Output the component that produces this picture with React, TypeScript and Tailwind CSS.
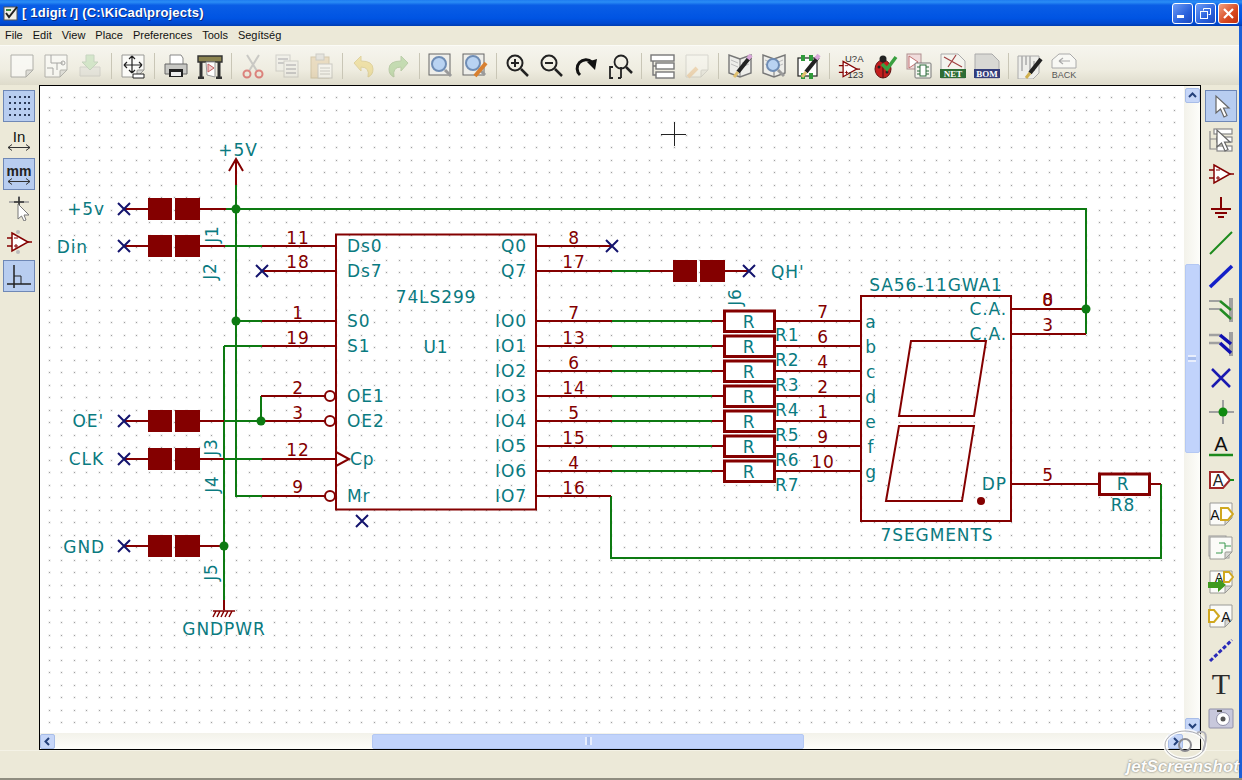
import type { ReactNode } from "react"

const RED = "#840000"
const GREEN = "#0d7a12"
const TEAL = "#0a7a80"
const NAVY = "#14146e"

function Ic({ children, size = 26 }: { children: ReactNode; size?: number }) {
  return (
    <svg width={size} height={size} viewBox="0 0 26 26" fill="none">
      {children}
    </svg>
  )
}

const Page = ({ o = 1 }: { o?: number }) => (
  <g opacity={o}>
    <path d="M2 2H24V17L17 24H2Z" fill="#fbfbf8" stroke="#9a9a96" />
    <path d="M17 24V18Q17 17 18 17H24Z" fill="#d8d8d4" stroke="#9a9a96" />
  </g>
)

const Lens = ({ x = 12, y = 11, r = 7 }: { x?: number; y?: number; r?: number }) => (
  <g>
    <circle cx={x} cy={y} r={r} fill="#b9d3f2" stroke="#6f8db5" strokeWidth="2" />
    <path d={`M${x + r - 1} ${y + r - 1}l6 6`} stroke="#9a9a9a" strokeWidth="3" />
  </g>
)

const Pencil = () => (
  <g>
    <path d="M23 4L11 19" stroke="#222" strokeWidth="4" />
    <path d="M24 2L21 6" stroke="#d9a7d9" strokeWidth="4" />
    <path d="M11 19L7 24" stroke="#e0c070" strokeWidth="3" />
  </g>
)

const Book = () => (
  <g>
    <path d="M13 6L2 2V20L13 24L24 20V2Z" fill="#eeeeea" stroke="#777" strokeWidth="1.4" />
    <path d="M13 6V24" stroke="#777" />
    <path d="M4 7l7 3M4 11l7 3M15 10l7-3M15 14l7-3" stroke="#bbb" />
  </g>
)

const Opamp = ({ c = RED }: { c?: string }) => (
  <g stroke={c} strokeWidth="1.5" fill="#fff">
    <path d="M6 4L22 13L6 22Z" />
    <path d="M1 9H6M1 17H6M22 13H26" />
    <path d="M8 9H12M8 17H12M10 15V19" strokeWidth="1" />
  </g>
)

const Chain = () => (
  <g stroke="#888" fill="#fff" strokeWidth="1.2">
    <rect x="6" y="2" width="18" height="5" />
    <rect x="9" y="10" width="15" height="5" />
    <rect x="9" y="19" width="15" height="5" />
    <path d="M2 4V22H9M2 12H9" fill="none" />
  </g>
)

const Arrow = ({ x = 0, y = 0 }: { x?: number; y?: number }) => (
  <path
    transform={`translate(${x} ${y})`}
    d="M4 2V19L8.500 15L12 23L15 21.500L11.500 14H17Z"
    fill="#fff"
    stroke="#666"
    strokeWidth="1.2"
  />
)

const topIcons: (ReactNode | null)[] = [
  <Page o={0.75} />,
  <g opacity={0.7}>
    <Page />
    <path d="M8 2V10H14V17M14 10H20M4 15H10V22" stroke="#888" />
    <circle cx="20" cy="10" r="2" stroke="#888" />
  </g>,
  <g opacity={0.4}>
    <path d="M3 14H23V23H3Z" fill="#d8d8d4" stroke="#aaa" />
    <path d="M9 2H17V9H21L13 17L5 9H9Z" fill="#a8d8a0" stroke="#8a8" />
  </g>,
  null,
  <g>
    <Page />
    <path d="M12 3V20M4 12H22M12 3l-3 3M12 3l3 3M12 20l-3-3M12 20l3-3M4 12l3-3M4 12l3 3M22 12l-3-3M22 12l-3 3" stroke="#222" strokeWidth="1.2" />
    <path d="M13 21H24V25H13Z" fill="#fff" stroke="#222" />
  </g>,
  null,
  <g>
    <path d="M7 2H18L20 5V12H7Z" fill="#fff" stroke="#888" />
    <path d="M2 11H24V21H2Z" fill="#c8c8c4" stroke="#666" />
    <path d="M6 16H20V24H6Z" fill="#222" />
    <path d="M8 19H18V23H8Z" fill="#eee" />
  </g>,
  <g>
    <path d="M1 3H25V9H1Z" fill="#8c8450" stroke="#333" strokeWidth="1.4" />
    <path d="M4 9V24M22 9V24M1 25H7M19 25H25" stroke="#333" strokeWidth="3" />
    <path d="M9 9H18V24L10 22Z" fill="#fff" stroke="#999" />
    <path d="M11 11L17 15L11 19Z" fill="#f3cfcf" stroke="#c06060" />
  </g>,
  null,
  <g opacity={0.55} stroke="#d03030" strokeWidth="2">
    <path d="M7 2L17 18M19 2L9 18" stroke="#aaa" />
    <circle cx="7" cy="21" r="3.500" />
    <circle cx="19" cy="21" r="3.500" />
  </g>,
  <g opacity={0.3}>
    <rect x="2" y="2" width="14" height="16" fill="#eee" stroke="#888" />
    <path d="M4 6H14M4 10H14" stroke="#778" strokeWidth="2" />
    <rect x="10" y="8" width="14" height="16" fill="#eee" stroke="#888" />
    <path d="M12 12H22M12 16H22M12 20H22" stroke="#778" strokeWidth="2" />
  </g>,
  <g opacity={0.35}>
    <rect x="3" y="4" width="18" height="21" fill="#dcb880" stroke="#a08040" />
    <rect x="8" y="1" width="8" height="6" fill="#ccc" stroke="#888" />
    <rect x="10" y="11" width="14" height="14" fill="#fff" stroke="#888" />
    <path d="M12 15H22M12 18H22M12 21H22" stroke="#888" />
  </g>,
  null,
  <g opacity={0.3}>
    <path d="M3 10L10 3V8Q22 8 22 16Q22 22 17 24Q19 14 10 14V18Z" fill="#e8c020" stroke="#b89000" />
  </g>,
  <g opacity={0.3} transform="matrix(-1 0 0 1 26 0)">
    <path d="M3 10L10 3V8Q22 8 22 16Q22 22 17 24Q19 14 10 14V18Z" fill="#60b040" stroke="#408020" />
  </g>,
  null,
  <g>
    <rect x="1" y="1" width="21" height="21" fill="#eeeeea" stroke="#666" />
    <Lens x={11} y={11} r={7} />
  </g>,
  <g>
    <rect x="1" y="1" width="21" height="21" fill="#eeeeea" stroke="#666" />
    <Lens x={11} y={10} r={7} />
    <path d="M24 10L13 23" stroke="#d88030" strokeWidth="4" />
  </g>,
  null,
  <g stroke="#222" strokeWidth="2">
    <circle cx="10" cy="10" r="7.500" />
    <path d="M16 16l7 7" strokeWidth="2.500" />
    <path d="M6 10H14M10 6V14" />
  </g>,
  <g stroke="#222" strokeWidth="2">
    <circle cx="10" cy="10" r="7.500" />
    <path d="M16 16l7 7" strokeWidth="2.500" />
    <path d="M6 10H14" />
  </g>,
  <g>
    <path d="M19 9A8 8 0 1 0 7 22" stroke="#111" strokeWidth="3" />
    <path d="M14 9L24 6L22 17Z" fill="#111" />
  </g>,
  <g stroke="#222" strokeWidth="1.8">
    <circle cx="14" cy="9" r="6.500" />
    <path d="M19 14l6 6" strokeWidth="2.500" />
    <path d="M6 14H3V25H6M14 14V25M14 25H11" />
  </g>,
  null,
  <g stroke="#777" fill="#fff" strokeWidth="1.4">
    <rect x="1" y="2" width="23" height="6" />
    <rect x="6" y="10" width="18" height="6" />
    <rect x="6" y="19" width="18" height="6" />
    <path d="M3 8V22H6M3 13H6" fill="none" />
  </g>,
  <g opacity={0.3}>
    <Page />
    <path d="M4 24L13 15" stroke="#e8a050" strokeWidth="4" />
  </g>,
  null,
  <g>
    <Book />
    <Pencil />
  </g>,
  <g>
    <Book />
    <Lens x={12} y={12} r={6} />
  </g>,
  <g>
    <rect x="3" y="5" width="19" height="18" fill="#fff" stroke="#222" strokeWidth="1.2" />
    <path d="M6 2h4v6H6zM14 2h4v6h-4zM6 20h4v6H6zM14 20h4v6h-4z" fill="#2f9a3a" />
    <Pencil />
  </g>,
  null,
  <g>
    <g transform="translate(0 5) scale(.85)">
      <Opamp />
    </g>
    <text x="7" y="9" fontSize="9.500" fontFamily="Liberation Sans" fill="#333">U?A</text>
    <text x="9.500" y="25" fontSize="9.500" fontFamily="Liberation Sans" fill="#333">123</text>
  </g>,
  <g>
    <ellipse cx="11" cy="16" rx="8" ry="9" fill="#c41e1e" stroke="#601010" />
    <circle cx="11" cy="6" r="3.500" fill="#222" />
    <path d="M11 8V25" stroke="#401010" />
    <circle cx="7" cy="14" r="1.500" fill="#222" />
    <circle cx="15" cy="19" r="1.500" fill="#222" />
    <path d="M10 11L15 16L24 4" stroke="#3aa040" strokeWidth="3.500" />
  </g>,
  <g>
    <rect x="1" y="1" width="14" height="15" fill="#f0dcdc" stroke="#b09090" />
    <path d="M3 3L12 9L3 15Z" fill="#fff" stroke="#c07070" />
    <rect x="9" y="10" width="16" height="15" rx="1" fill="#f4f4ee" stroke="#777" />
    <rect x="14" y="12" width="6" height="11" fill="#fff" stroke="#2a6a3a" />
    <path d="M11 14h3M11 18h3M11 21h3M20 14h3M20 18h3M20 21h3" stroke="#2a6a3a" />
  </g>,
  <g>
    <path d="M1 1H18L25 8V25H1Z" fill="#f4f4ee" stroke="#aaa" />
    <path d="M4 4L22 14M16 2L8 14" stroke="#a04040" strokeWidth="1.2" />
    <rect x="0" y="16" width="26" height="9" fill="#2d6d35" />
    <text x="13" y="24" textAnchor="middle" fontSize="9" fontWeight="700" fontFamily="Liberation Serif" fill="#fff">NET</text>
  </g>,
  <g>
    <path d="M1 1H18L25 8V25H1Z" fill="#d8d8d4" stroke="#aaa" />
    <rect x="0" y="16" width="26" height="9" fill="#333d7a" />
    <text x="13" y="24" textAnchor="middle" fontSize="9" fontWeight="700" fontFamily="Liberation Serif" fill="#fff">BOM</text>
  </g>,
  null,
  <g>
    <path d="M1 3H22V20L16 26H1Z" fill="#eeeeea" stroke="#aaa" />
    <path d="M5 3V18M9 3V12M13 3V20M17 8V18" stroke="#aaa" strokeWidth="1.5" />
    <path d="M24 6L13 20" stroke="#222" strokeWidth="4" />
    <path d="M13 20L9 25" stroke="#d0b050" strokeWidth="3" />
  </g>,
  <g>
    <path d="M8 1H19L25 7V15H1V7Z" fill="#f8f8f4" stroke="#aaa" />
    <path d="M19 8H8M8 8l4-3M8 8l4 3" stroke="#aaa" strokeWidth="1.2" />
    <text x="13" y="24.500" textAnchor="middle" fontSize="9" fontFamily="Liberation Sans" fill="#555">BACK</text>
  </g>,
]

const rightIcons: ReactNode[] = [
  <Ic><Arrow x={4} y={1} /></Ic>,
  <Ic>
    <Chain />
    <Arrow x={5} y={1} />
  </Ic>,
  <Ic><Opamp /></Ic>,
  <Ic><path d="M13 2V14M3 14H23M7 18H19M10 22H16" stroke={RED} strokeWidth="2" /></Ic>,
  <Ic><path d="M2 25L24 3" stroke="#1c8a1c" strokeWidth="2" /></Ic>,
  <Ic><path d="M2 24L24 3" stroke="#1420c8" strokeWidth="3.500" /></Ic>,
  <Ic>
    <path d="M23 1V25" stroke="#a0a0a0" strokeWidth="4" />
    <path d="M1 4H12M1 12H12" stroke="#a0a0a0" strokeWidth="2" />
    <path d="M12 4L23 13M12 12L23 22" stroke="#228b22" strokeWidth="2.500" />
  </Ic>,
  <Ic>
    <path d="M23 1V25" stroke="#a0a0a0" strokeWidth="4" />
    <path d="M1 4H12M1 12H12" stroke="#a0a0a0" strokeWidth="2.500" />
    <path d="M12 4L23 13M12 12L23 22" stroke="#1010b0" strokeWidth="3.500" />
  </Ic>,
  <Ic><path d="M4 4L22 22M22 4L4 22" stroke="#1a1ab0" strokeWidth="2.500" /></Ic>,
  <Ic>
    <path d="M1 13H26M15 1V25" stroke="#a0a0a0" strokeWidth="2" />
    <circle cx="15" cy="13" r="4.500" fill="#0f8a0f" />
  </Ic>,
  <Ic>
    <path d="M1 22H25" stroke="#1c8a1c" strokeWidth="2.500" />
    <text x="13" y="18" textAnchor="middle" fontSize="20" fontFamily="Liberation Sans" fill="#111">A</text>
  </Ic>,
  <Ic>
    <path d="M2 5H15L22 13L15 21H2Z" fill="#fff" stroke="#a02828" strokeWidth="2" />
    <path d="M22 13H26" stroke="#1c8a1c" strokeWidth="2" />
    <text x="10" y="19" textAnchor="middle" fontSize="16" fontFamily="Liberation Sans" fill="#222">A</text>
  </Ic>,
  <Ic>
    <Page />
    <text x="7" y="19" textAnchor="middle" fontSize="14" fontFamily="Liberation Sans" fill="#111">A</text>
    <path d="M13 7H20L25 13L20 19H13Z" fill="#fff" stroke="#d0a820" strokeWidth="2" />
  </Ic>,
  <Ic>
    <rect x="1" y="1" width="17" height="20" fill="#f4f4f0" stroke="#999" />
    <rect x="4" y="3" width="17" height="20" fill="#f8f8f4" stroke="#999" />
    <Page />
    <path d="M11 8H17V14M17 11H23M8 18H14V14" stroke="#3a9a50" />
  </Ic>,
  <Ic>
    <Page />
    <text x="11" y="13" textAnchor="middle" fontSize="12" fontFamily="Liberation Sans" fill="#111">A</text>
    <path d="M16 3H21L25 8L21 13H16Z" fill="#fff" stroke="#d0a820" strokeWidth="2" />
    <path d="M0 13H10V9L18 16L10 23V19H0Z" fill="#3f9a1f" />
  </Ic>,
  <Ic>
    <Page />
    <path d="M1 7H6L11 13L6 19H1Z" fill="#fff" stroke="#d0a820" strokeWidth="2" />
    <text x="18" y="19" textAnchor="middle" fontSize="14" fontFamily="Liberation Sans" fill="#111">A</text>
  </Ic>,
  <Ic><path d="M2 24L24 3" stroke="#2a2ab8" strokeWidth="3" strokeDasharray="4 2" /></Ic>,
  <span className="font-['Liberation_Serif',serif] text-[30px] leading-[30px] text-[#2a2a2a]">T</span>,
  <Ic>
    <rect x="1" y="4" width="24" height="19" rx="1" fill="#c8c8dc" stroke="#9090a8" />
    <circle cx="15" cy="14" r="6.500" fill="#fff" stroke="#9090a8" />
    <circle cx="15" cy="14" r="2.500" fill="#555" />
    <path d="M9 6h5" stroke="#444" strokeWidth="2" />
  </Ic>,
]

function Btn({ active, children }: { active?: boolean; children: ReactNode }) {
  return (
    <div
      className={
        active
          ? "w-[32px] h-[32px] flex items-center justify-center bg-[#b8cdf0] border border-[#6f88b6]"
          : "w-[32px] h-[32px] flex items-center justify-center"
      }
    >
      {children}
    </div>
  )
}

function ScrollBtn({ d }: { d: string }) {
  return (
    <div className="w-[15px] h-[15px] rounded-[2px] bg-[#c6d6f8] border border-[#a8bde8] flex items-center justify-center">
      <svg width="11" height="11" viewBox="0 0 11 11" fill="none">
        <path d={d} stroke="#24407a" strokeWidth="2" />
      </svg>
    </div>
  )
}

function gridPath(size: number) {
  const off = (size - 1) / 2
  let d = ""
  for (let i = 0; i < 91; i++) {
    for (let j = 0; j < 52; j++) {
      d += `M${Math.round(48.5 + i * 12.5) - off} ${Math.round(97 + j * 12.5) - off}h${size}v${size}h-${size}z`
    }
  }
  return d
}

function T({
  x,
  y,
  s,
  a = "start",
  c = TEAL,
  r,
}: {
  x: number
  y: number
  s: string
  a?: "start" | "middle" | "end"
  c?: string
  r?: boolean
}) {
  if (r) {
    return (
      <text transform={`translate(${x} ${y}) rotate(-90)`} y="6" textAnchor="middle" fill={c}>
        {s}
      </text>
    )
  }
  return (
    <text x={x} y={y + 6} textAnchor={a} fill={c}>
      {s}
    </text>
  )
}

const rows = [321, 346, 371, 396, 421, 446, 471]
const leftNums = ["7", "13", "6", "14", "5", "15", "4"]
const rightNums = ["7", "6", "4", "2", "1", "9", "10"]
const ioNames = ["IO0", "IO1", "IO2", "IO3", "IO4", "IO5", "IO6"]
const segNames = ["a", "b", "c", "d", "e", "f", "g"]
const noConn = [
  [124, 209],
  [124, 246],
  [124, 421],
  [124, 459],
  [124, 546],
  [262, 271],
  [612, 246],
  [749, 271],
  [362, 521],
]
const pads = [
  [148, 198],
  [175, 198],
  [148, 235],
  [175, 235],
  [148, 410],
  [175, 410],
  [148, 448],
  [175, 448],
  [148, 535],
  [175, 535],
  [673, 260],
  [700, 260],
]
const pinNums: [number, number, string][] = [
  [298, 238, "11"],
  [298, 262, "18"],
  [298, 313, "1"],
  [298, 338, "19"],
  [298, 388, "2"],
  [298, 413, "3"],
  [298, 450, "12"],
  [298, 487, "9"],
  [574, 238, "8"],
  [574, 262, "17"],
  [574, 488, "16"],
  [1048, 475, "5"],
  [1048, 300, "8"],
  [1048, 300, "0"],
  [1048, 325, "3"],
]

const redWires =
  "M124 209H148M200 209H226M124 246H148M200 246H225M262 246H336M262 271H336M262 321H336M262 346H336M261 396H325M261 421H325M124 421H148M200 421H224M124 459H148M200 459H224M262 459H336M262 496H325M124 546H148M200 546H224" +
  "M236 185V159M229 171L236 159L243 171M224 600V610M536 246H612M536 271H612M650 271H673M725 271H749M536 321H612M536 346H612M536 371H612M536 396H612M536 421H612M536 446H612M536 471H612M536 496H611" +
  "M712 321H724M712 346H724M712 371H724M712 396H724M712 421H724M712 446H724M712 471H724M775 321H861M775 346H861M775 371H861M775 396H861M775 421H861M775 446H861M775 471H861" +
  "M1011 309H1086M1011 334H1086M1011 484H1099M1150 484H1161"
const greenWires =
  "M226 209H1086V334M236 185V496H262M225 246H262M236 321H262M224 346H262M224 346V600M225 421H261V396M224 459H262M612 271H650M612 321H712M612 346H712M612 371H712M612 396H712M612 421H712M612 446H712M612 471H712M611 496V558H1161V484"

function Schematic() {
  return (
    <svg
      width="1144"
      height="647"
      viewBox="40 86 1144 647"
      fill="none"
      className="block font-['DejaVu_Sans',sans-serif] text-[17px] tracking-[0.900px]"
    >
      <path d={gridPath(3)} fill="#f3f3f3" shapeRendering="crispEdges" />
      <path d={gridPath(1)} fill="#a0a0a0" shapeRendering="crispEdges" />
      <path d="M674 122V146M661 134H686" stroke="#222" strokeWidth="1" shapeRendering="crispEdges" />

      <path d={greenWires} stroke={GREEN} strokeWidth="2" />
      <path d={redWires} stroke={RED} strokeWidth="2" />
      {pads.map(([x, y]) => (
        <rect key={`${x}-${y}`} x={x} y={y} width={x === 148 || x === 673 ? 24 : 25} height="22" fill={RED} />
      ))}
      {noConn.map(([x, y]) => (
        <path key={`${x}-${y}`} d={`M${x - 6} ${y - 6}l12 12M${x + 6} ${y - 6}l-12 12`} stroke={NAVY} strokeWidth="2" />
      ))}
      {[
        [236, 209],
        [236, 321],
        [261, 421],
        [224, 546],
        [1086, 309],
      ].map(([x, y]) => (
        <circle key={`${x}-${y}`} cx={x} cy={y} r="4.500" fill={GREEN} />
      ))}

      <rect x="336" y="234.500" width="200" height="275" stroke={RED} strokeWidth="2" />
      <circle cx="330" cy="396" r="5" fill="#fff" stroke={RED} strokeWidth="2" />
      <circle cx="330" cy="421" r="5" fill="#fff" stroke={RED} strokeWidth="2" />
      <circle cx="330" cy="496" r="5" fill="#fff" stroke={RED} strokeWidth="2" />
      <path d="M336 452L349 459L336 466" stroke={RED} strokeWidth="2" />
      <path d="M213 611H235M216 611l-3 6M220 611l-3 6M224 611l-3 6M228 611l-3 6M232 611l-3 6" stroke={RED} strokeWidth="1.500" />

      {rows.map((y, i) => (
        <g key={y}>
          <rect x="724.500" y={y - 10} width="50" height="20.500" stroke={RED} strokeWidth="3" fill="#fff" />
          <T x={749} y={y + 1} s="R" a="middle" />
          <T x={775} y={y + 14} s={`R${i + 1}`} />
          <T x={574} y={y - 8} s={leftNums[i]} a="middle" c={RED} />
          <T x={823} y={y - 9} s={rightNums[i]} a="middle" c={RED} />
          <T x={527} y={y} s={ioNames[i]} a="end" />
          <T x={871} y={y + 1} s={segNames[i]} a="middle" />
        </g>
      ))}
      {pinNums.map(([x, y, s]) => (
        <T key={`${x}-${y}-${s}`} x={x} y={y} s={s} a="middle" c={RED} />
      ))}

      <rect x="1099.500" y="474" width="50" height="20.500" stroke={RED} strokeWidth="3" fill="#fff" />
      <T x={1123} y={484} s="R" a="middle" />
      <T x={1123} y={505} s="R8" a="middle" />

      <rect x="861" y="296" width="150" height="225" stroke={RED} strokeWidth="2" fill="none" />
      <path d="M911 341H986L974 416H899ZM899 426H974L962 501H886Z" stroke={RED} strokeWidth="2" />
      <circle cx="981" cy="501" r="4" fill={RED} />

      <T x={238} y={150} s="+5V" a="middle" />
      <T x={105} y={209} s="+5v" a="end" />
      <T x={88} y={247} s="Din" a="end" />
      <T x={104} y={421} s="OE'" a="end" />
      <T x={104} y={459} s="CLK" a="end" />
      <T x={105} y={547} s="GND" a="end" />
      <T x={212} y={234} s="J1" r />
      <T x={210} y={271} s="J2" r />
      <T x={211} y={447} s="J3" r />
      <T x={212} y={484} s="J4" r />
      <T x={211} y={572} s="J5" r />
      <T x={735} y={297} s="J6" r />
      <T x={224} y={629} s="GNDPWR" a="middle" />
      <T x={347} y={246} s="Ds0" />
      <T x={347} y={271} s="Ds7" />
      <T x={436} y={297} s="74LS299" a="middle" />
      <T x={347} y={321} s="S0" />
      <T x={347} y={346} s="S1" />
      <T x={436} y={347} s="U1" a="middle" />
      <T x={347} y={396} s="OE1" />
      <T x={347} y={421} s="OE2" />
      <T x={350} y={459} s="Cp" />
      <T x={347} y={496} s="Mr" />
      <T x={527} y={246} s="Q0" a="end" />
      <T x={527} y={271} s="Q7" a="end" />
      <T x={527} y={496} s="IO7" a="end" />
      <T x={771} y={272} s="QH'" />
      <T x={936} y={285} s="SA56-11GWA1" a="middle" />
      <T x={937} y={535} s="7SEGMENTS" a="middle" />
      <T x={1007} y={309} s="C.A." a="end" />
      <T x={1007} y={334} s="C.A." a="end" />
      <T x={1007} y={484} s="DP" a="end" />
    </svg>
  )
}

function WinBtn({ children, close }: { children: ReactNode; close?: boolean }) {
  return (
    <div
      className={
        close
          ? "w-[21px] h-[21px] rounded-[3px] border border-white flex items-center justify-center bg-[linear-gradient(135deg,#f0a080,#d8481f_60%,#c03010)]"
          : "w-[21px] h-[21px] rounded-[3px] border border-white flex items-center justify-center bg-[linear-gradient(135deg,#6f9cf5,#2a62dc_60%,#1b49c0)]"
      }
    >
      {children}
    </div>
  )
}

export default function App() {
  return (
    <div className="relative w-[1242px] h-[780px] flex flex-col overflow-hidden bg-[#ece9d8] font-['Liberation_Sans',sans-serif]">
      {/* title bar */}
      <div className="h-[26px] flex items-center pl-[3px] pr-[3px] bg-[linear-gradient(180deg,#1f7cf0_0%,#2a8df5_8%,#0a5ee6_20%,#0054e3_70%,#0049d0_90%,#003cb0_100%)]">
        <svg width="16" height="16" viewBox="0 0 16 16" className="mr-[3px]">
          <rect x="1" y="2" width="13" height="13" fill="#f0f0e8" stroke="#555" />
          <path d="M3 8L6 12L14 2" stroke="#222" strokeWidth="2" fill="none" />
          <path d="M3 5H8" stroke="#3a8a3a" strokeWidth="2" />
        </svg>
        <div className="text-white text-[13px] font-bold tracking-[0.2px] [text-shadow:1px_1px_0_#0a2a80]">
          [ 1digit /] (C:\KiCad\projects)
        </div>
        <div className="ml-auto flex gap-[2px]">
          <WinBtn>
            <div className="w-[7px] h-[3px] bg-white mt-[7px] mr-[4px]" />
          </WinBtn>
          <WinBtn>
            <svg width="13" height="13" viewBox="0 0 13 13" fill="none" stroke="#fff">
              <path d="M4.500 3.500V1.500H11.500V7.500H9.500" />
              <rect x="1.500" y="4.500" width="7" height="7" />
            </svg>
          </WinBtn>
          <WinBtn close>
            <svg width="13" height="13" viewBox="0 0 13 13" stroke="#fff" strokeWidth="2.200">
              <path d="M2 2L11 11M11 2L2 11" />
            </svg>
          </WinBtn>
        </div>
      </div>

      <div className="flex-1 flex flex-col border-r-[3px] border-[#1a5fd8] min-h-0">
        {/* menu */}
        <div className="h-[19px] flex items-center gap-[10px] pl-[5px] text-[11px] text-[#111] bg-[#ece9d8]">
          <span>File</span>
          <span>Edit</span>
          <span>View</span>
          <span>Place</span>
          <span>Preferences</span>
          <span>Tools</span>
          <span>Segítség</span>
        </div>

        {/* toolbar */}
        <div className="h-[40px] flex items-center pl-[5px] border-t border-[#fbfbf6] bg-[linear-gradient(180deg,#f6f5ee,#efede1_60%,#dedbcb)]">
          {topIcons.map((icon, i) =>
            icon === null ? (
              <div key={i} className="w-[9px] flex justify-center">
                <div className="w-px h-[26px] bg-[#c9c6b6]" />
              </div>
            ) : (
              <div key={i} className="w-[34px] flex justify-center">
                <Ic>{icon}</Ic>
              </div>
            ),
          )}
        </div>

        <div className="flex-1 flex min-h-0">
          {/* left toolbar */}
          <div className="w-[39px] flex flex-col gap-[2px] pt-[5px] pl-[3px] bg-[#ece9d8]">
            <Btn active>
              <svg width="24" height="24" viewBox="0 0 24 24" fill="#2c3a58">
                {[3, 9, 15, 21].map((y) =>
                  [3, 8, 13, 18, 22].map((x) => <rect key={`${x}-${y}`} x={x - 1} y={y - 1} width="2" height="2" />),
                )}
              </svg>
            </Btn>
            <Btn>
              <div className="flex flex-col items-center leading-none text-[15px] text-[#111]">
                <span>In</span>
                <svg width="24" height="7" viewBox="0 0 24 7" fill="none" stroke="#333">
                  <path d="M1 3.500H23M1 3.500l4-3M1 3.500l4 3M23 3.500l-4-3M23 3.500l-4 3" />
                </svg>
              </div>
            </Btn>
            <Btn active>
              <div className="flex flex-col items-center leading-none text-[14px] font-bold text-[#222]">
                <span>mm</span>
                <svg width="24" height="7" viewBox="0 0 24 7" fill="none" stroke="#333">
                  <path d="M1 3.500H23M1 3.500l4-3M1 3.500l4 3M23 3.500l-4-3M23 3.500l-4 3" />
                </svg>
              </div>
            </Btn>
            <Btn>
              <Ic>
                <path d="M3 7H23M13 1V21" stroke="#999" strokeWidth="1.500" />
                <path d="M8 7H18M13 2V12" stroke="#333" strokeWidth="1.500" />
                <path d="M12 9V24L15.500 21L18 26L20 25L18 20H23Z" fill="#fff" stroke="#777" />
              </Ic>
            </Btn>
            <Btn>
              <Ic>
                <Opamp />
                <circle cx="12" cy="3" r="2" fill="#bbb" />
                <circle cx="12" cy="23" r="2" fill="#bbb" />
              </Ic>
            </Btn>
            <Btn active>
              <Ic>
                <path d="M1 21H25M8 2V25" stroke="#222" strokeWidth="1.500" />
                <path d="M8 13H15V21" stroke="#222" strokeWidth="1" />
              </Ic>
            </Btn>
          </div>

          {/* canvas with scrollbars */}
          <div className="w-[1162px] flex flex-col border border-black bg-white">
            <div className="flex">
              <Schematic />
              <div className="w-[16px] h-[647px] flex flex-col items-center pt-[2px] bg-[linear-gradient(90deg,#f3f2ea,#fdfdfa)]">
                <ScrollBtn d="M2 7L5.500 3.500L9 7" />
                <div className="h-[161px] shrink-0" />
                <div className="w-[15px] h-[189px] shrink-0 rounded-[2px] bg-[#c1d3fb] border border-[#b4c8f3] flex items-center justify-center">
                  <div className="w-[8px] h-[7px] border-y-2 border-[#e8eefc] bg-[#a9bfee]" />
                </div>
                <div className="flex-1" />
                <ScrollBtn d="M2 4L5.500 7.500L9 4" />
              </div>
            </div>
            <div className="h-[16px] flex items-center bg-[linear-gradient(180deg,#f3f2ea,#fdfdfa)]">
              <ScrollBtn d="M7 2L3.500 5.500L7 9" />
              <div className="w-[317px] shrink-0" />
              <div className="h-[15px] w-[432px] shrink-0 rounded-[2px] bg-[#c1d3fb] border border-[#b4c8f3] flex items-center justify-center">
                <div className="h-[8px] w-[7px] border-x-2 border-[#e8eefc] bg-[#a9bfee]" />
              </div>
              <div className="flex-1" />
              <div className="mr-[17px]">
                <ScrollBtn d="M4 2L7.500 5.500L4 9" />
              </div>
            </div>
          </div>

          {/* right toolbar */}
          <div className="flex-1 flex flex-col gap-[2px] pt-[5px] pl-[4px] bg-[#ece9d8]">
            {rightIcons.map((icon, i) => (
              <Btn key={i} active={i === 0}>
                {icon}
              </Btn>
            ))}
          </div>
        </div>

        {/* status bar */}
        <div className="h-[28px] bg-[#ece9d8] border-t border-[#f4f2e6]" />
      </div>
      <div className="h-[2px] bg-[#8f8d80]" />

      {/* watermark lying over the window */}
      <svg width="50" height="38" viewBox="0 0 50 38" fill="none" className="absolute left-[1161px] top-[727px]">
        <ellipse cx="24" cy="18" rx="20" ry="14" stroke="#fff" strokeWidth="4" opacity=".8" />
        <ellipse cx="24" cy="18" rx="20" ry="14" stroke="#8a8a90" strokeWidth="1" opacity=".7" />
        <circle cx="24" cy="18" r="6" stroke="#8a8a90" strokeWidth="2" />
        <path d="M36 6Q50 0 42 24" stroke="#b0b0b8" strokeWidth="2" />
      </svg>
      <div className="absolute right-[3px] bottom-[5px] italic font-bold text-[17px] leading-none text-white opacity-90 [text-shadow:0_0_2px_#555]">
        jetScreenshot
      </div>
    </div>
  )
}
